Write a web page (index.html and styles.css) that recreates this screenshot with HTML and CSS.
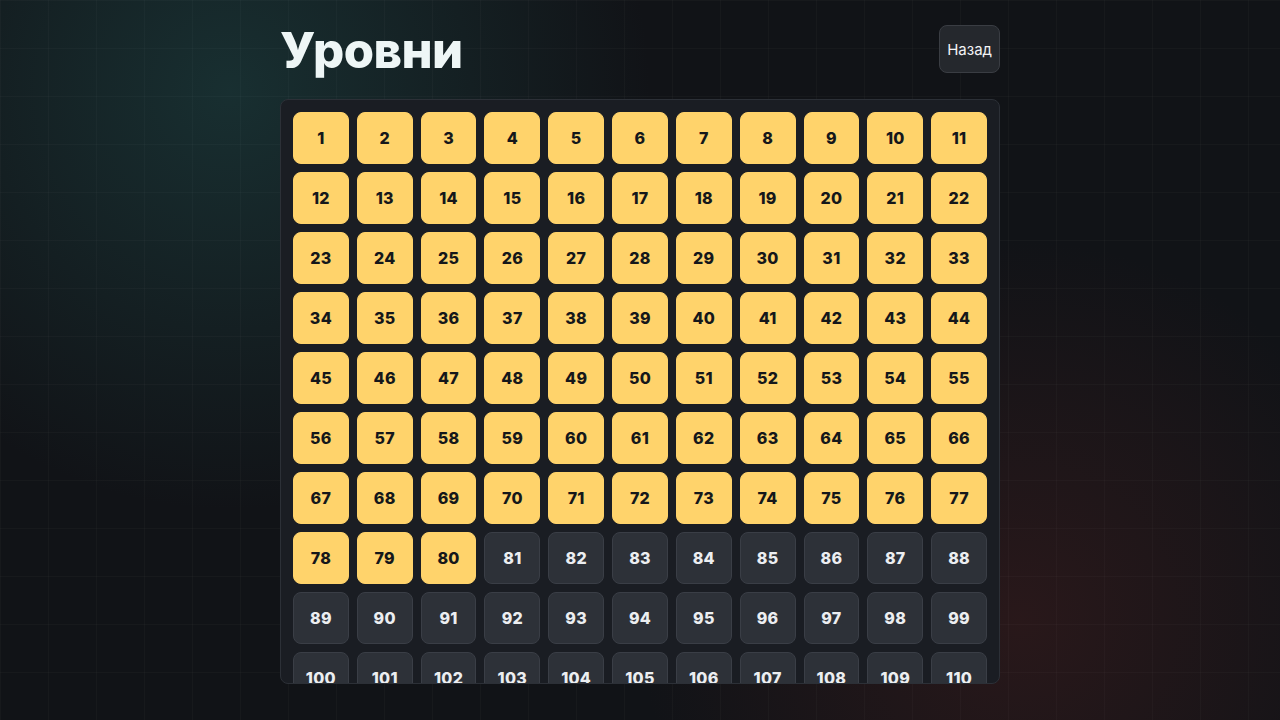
FILE: index.html
```html
<!DOCTYPE html>
<html lang="ru">
<head>
    <meta charset="UTF-8">
    <meta name="viewport" content="width=device-width, initial-scale=1.0">
    <title>Уровни</title>
    <link rel="stylesheet" href="styles.css">
</head>
<body>
    <div class="container">
        <div class="header">
            <h1>Уровни</h1>
            <button class="back-button">Назад</button>
        </div>
        <div class="levels" id="levels"></div>
    </div>

    <script>
        const levels = document.getElementById('levels');
        const unlocked = 80; // levels opened so far
        for (let i = 1; i <= 121; i++) {
            const btn = document.createElement('button');
            btn.className = i <= unlocked ? 'level open' : 'level locked';
            btn.textContent = i;
            levels.appendChild(btn);
        }
    </script>
</body>
</html>
```

FILE: styles.css
```css
html, body {
    height: 100%;
}

body {
    font-family: Inter, "Noto Sans", sans-serif;
    margin: 0;
    padding: 0;
    overflow: hidden;
    background-color: #111317;
    background-image:
        linear-gradient(rgba(255, 255, 255, 0.025) 1px, transparent 1px),
        linear-gradient(90deg, rgba(255, 255, 255, 0.025) 1px, transparent 1px),
        radial-gradient(circle at 230px 90px, rgba(30, 70, 70, 0.55) 0, rgba(30, 70, 70, 0) 420px),
        radial-gradient(circle at 1020px 620px, rgba(70, 30, 30, 0.45) 0, rgba(70, 30, 30, 0) 380px);
    background-size: 48px 48px, 48px 48px, 100% 100%, 100% 100%;
    color: #e9eef0;
}

.container {
    width: 720px;
    margin: 0 auto;
    padding-top: 24px;
}

.header {
    display: flex;
    justify-content: space-between;
    align-items: center;
    margin-bottom: 25px;
}

h1 {
    margin: 0;
    padding-top: 4px;
    font-size: 49px;
    font-weight: 800;
    letter-spacing: -0.5px;
    color: #eef6f6;
    line-height: 46px;
}

.back-button {
    height: 48px;
    padding: 0 7px;
    background-color: #25282d;
    color: #f2f3f5;
    border: 1px solid #3a3d43;
    border-radius: 8px;
    font-family: Inter, sans-serif;
    font-size: 15px;
    cursor: pointer;
}

.back-button:hover {
    background-color: #2e3238;
}

.levels {
    display: grid;
    grid-template-columns: repeat(11, 1fr);
    gap: 8px;
    padding: 12px;
    height: 559px;
    overflow: hidden;
    background-color: #1a1d23;
    border: 1px solid #2c3037;
    border-radius: 8px;
}

.level {
    height: 52px;
    border-radius: 8px;
    font-family: Inter, sans-serif;
    font-size: 16px;
    font-weight: 800;
    letter-spacing: 0.3px;
    cursor: pointer;
}

.level.open {
    background-color: #ffd36b;
    color: #15171a;
    border: 1px solid #ffd36b;
}

.level.locked {
    background-color: #2d3138;
    color: #eceef1;
    border: 1px solid #3a3e46;
}
```
